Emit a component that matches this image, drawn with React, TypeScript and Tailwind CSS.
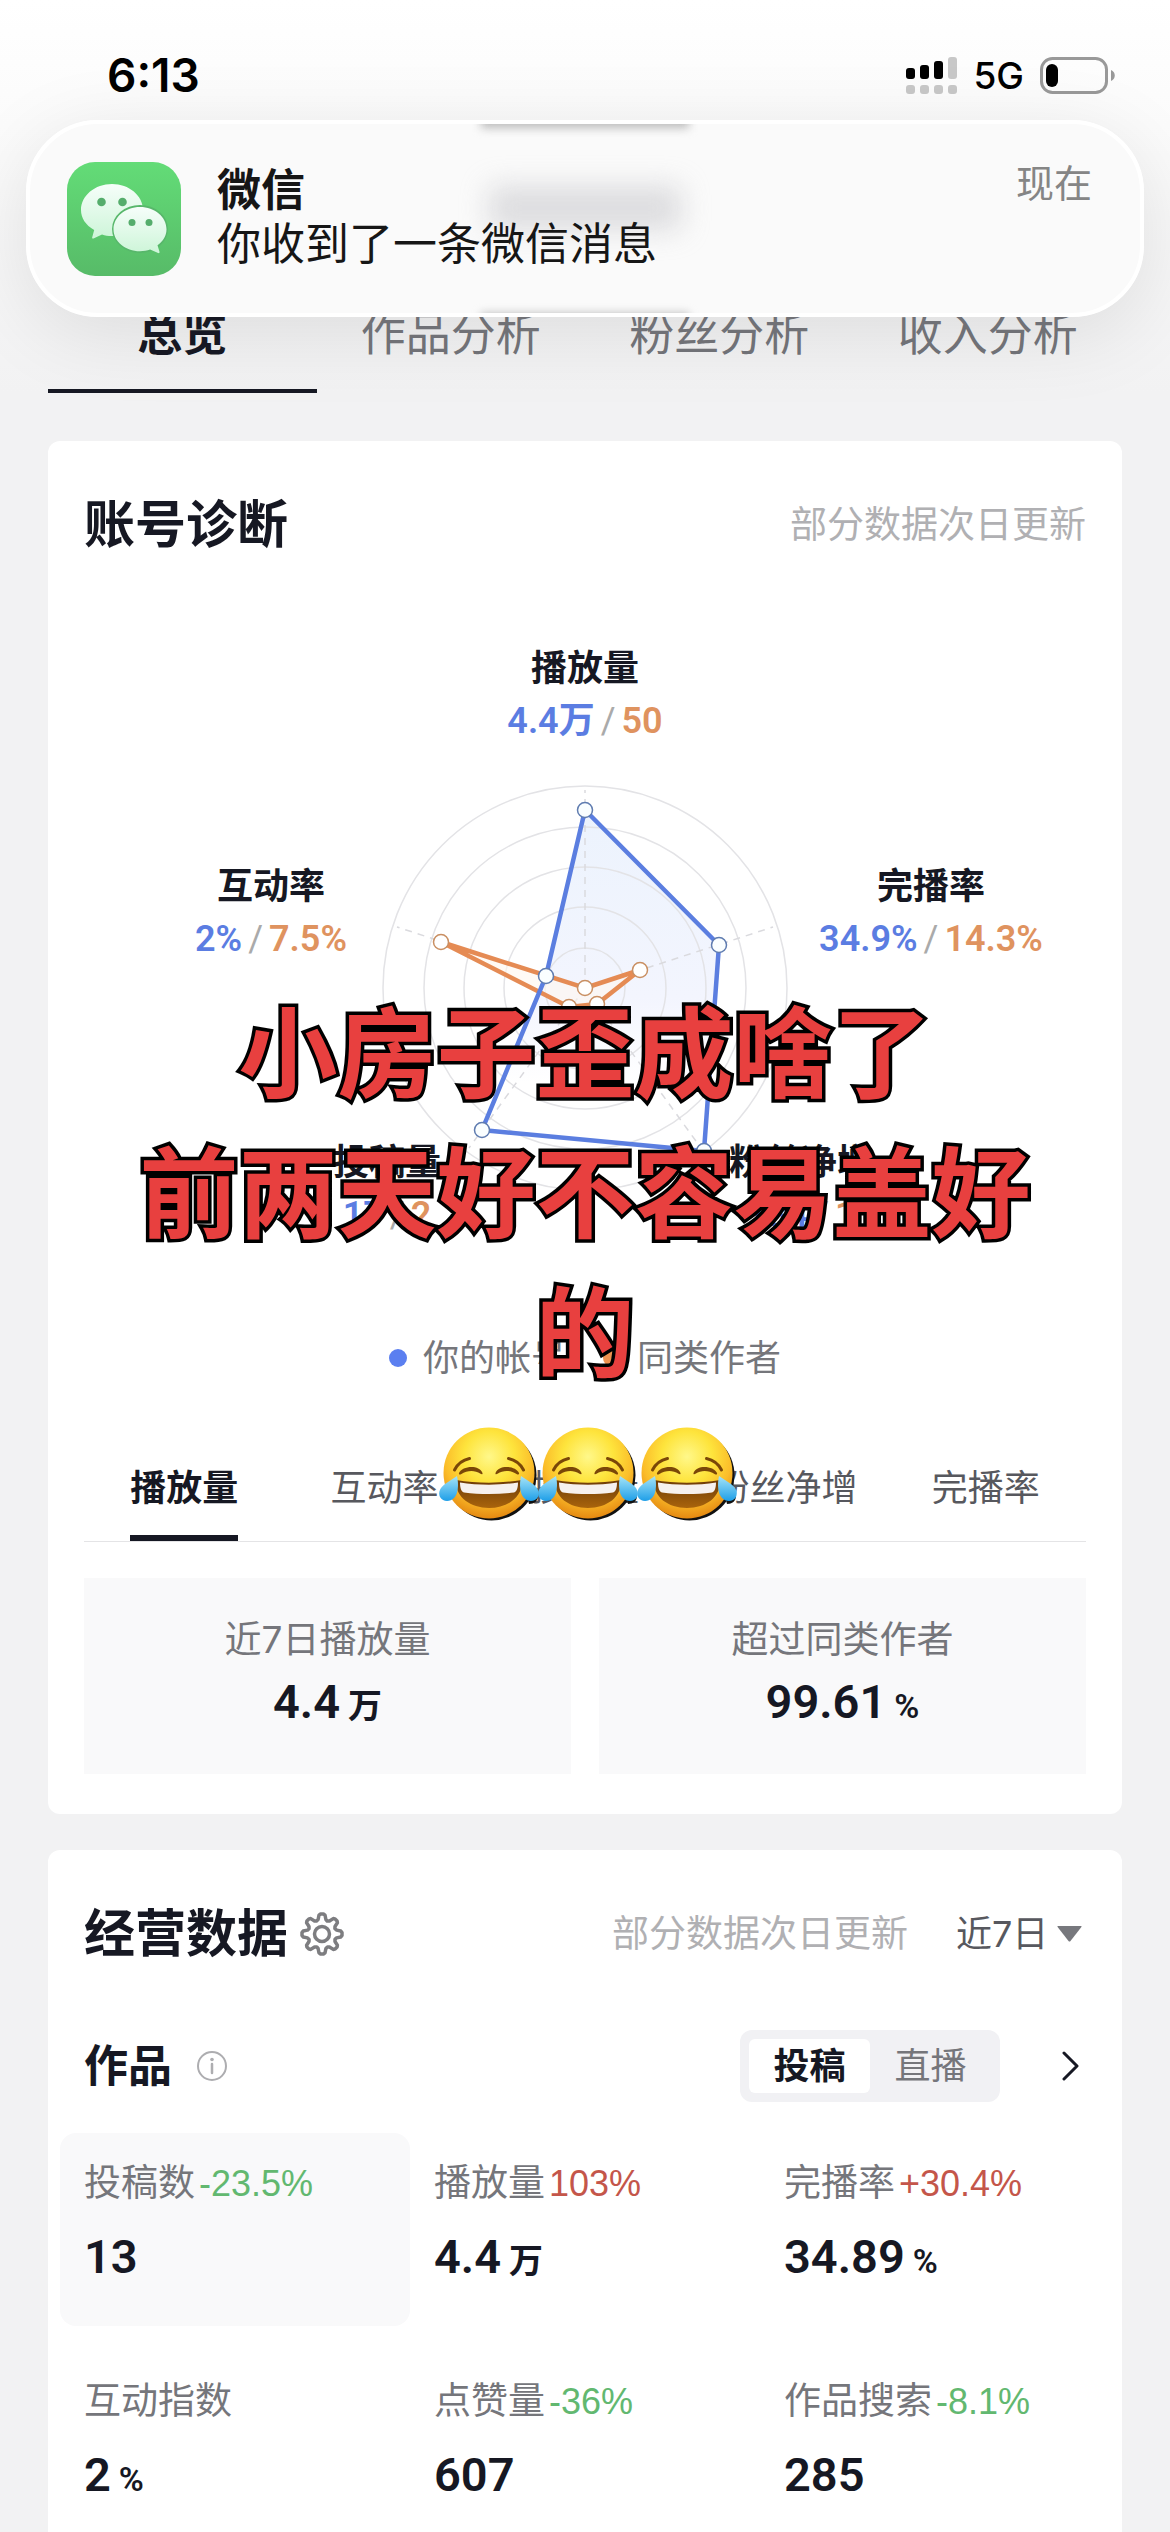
import { useState } from "react";

type Metric = { label: string; value: string; unit?: string; change?: string; trend?: "up" | "down" };

type AxisLabel = { name: string; mine: string; peer: string; x: number; y: number };

const pageTabs = ["总览", "作品分析", "粉丝分析", "收入分析"];
const chartTabs = ["播放量", "互动率", "投稿量", "粉丝净增", "完播率"];

const metrics: Metric[] = [
  { label: "投稿数", value: "13", change: "-23.5%", trend: "down" },
  { label: "播放量", value: "4.4", unit: "万", change: "103%", trend: "up" },
  { label: "完播率", value: "34.89", unit: "%", change: "+30.4%", trend: "up" },
  { label: "互动指数", value: "2", unit: "%" },
  { label: "点赞量", value: "607", change: "-36%", trend: "down" },
  { label: "作品搜索", value: "285", change: "-8.1%", trend: "down" },
];

const axisLabels: AxisLabel[] = [
  { name: "播放量", mine: "4.4万", peer: "50", x: 501, y: 51 },
  { name: "互动率", mine: "2%", peer: "7.5%", x: 187, y: 269 },
  { name: "完播率", mine: "34.9%", peer: "14.3%", x: 847, y: 269 },
  { name: "投稿量", mine: "17", peer: "2", x: 303, y: 545 },
  { name: "粉丝净增", mine: "184", peer: "1", x: 717, y: 545 },
];

const minePoints = [[501, 180], [635, 315], [620, 521], [398, 500], [462, 346]];
const peerPoints = [[501, 358], [556, 340], [513, 374], [485, 377], [357, 312]];
const axisEnds = [[501, 160], [689, 297], [617, 518], [385, 518], [313, 297]];

const toPoints = (list: number[][]) => list.map((p) => p.join(",")).join(" ");

// eight-tooth gear outline around 22,22
const gearPoints = Array.from({ length: 8 }, (_, i) => {
  const at = (deg: number, r: number) => {
    const a = ((i * 45 + deg) * Math.PI) / 180;
    return `${(22 + r * Math.sin(a)).toFixed(1)},${(22 - r * Math.cos(a)).toFixed(1)}`;
  };
  return [at(-15, 15), at(-9, 19), at(-4, 20), at(4, 20), at(9, 19), at(15, 15), at(22, 14)].join(" ");
}).join(" ");

function StatusBar() {
  return (
    <div className="flex h-[150px] items-center justify-between pl-[107px] pr-[55px] text-black">
      <span className="text-[46px] font-semibold leading-none">6:13</span>
      <div className="flex items-center gap-4">
        <svg width="51" height="37" viewBox="0 0 51 37" aria-hidden="true">
          <rect x="0" y="11" width="9" height="11" rx="3" />
          <rect x="14" y="8" width="9" height="14" rx="3" />
          <rect x="28" y="4" width="9" height="18" rx="3" />
          <rect x="42" y="0" width="9" height="22" rx="3" fill="#c8c8c8" />
          {[0, 14, 28, 42].map((x) => (
            <rect key={x} x={x} y="28" width="9" height="9" rx="3" fill="#c8c8c8" />
          ))}
        </svg>
        <span className="text-[37px] font-medium leading-none">5G</span>
        <svg width="75" height="37" viewBox="0 0 75 37" aria-hidden="true">
          <rect x="1.5" y="1.5" width="65" height="34" rx="11" fill="none" stroke="#999" strokeWidth="3" />
          <rect x="6" y="7" width="12" height="23" rx="6" />
          <path d="M71 13c5 2 5 9 0 11z" fill="#999" />
        </svg>
      </div>
    </div>
  );
}

function WeChatIcon() {
  return (
    <svg className="size-[114px] shrink-0" viewBox="0 0 114 114" aria-hidden="true">
      <defs>
        <linearGradient id="wx-bg" x1="0" y1="0" x2="0" y2="1">
          <stop offset="0" stopColor="#63dc77" />
          <stop offset="1" stopColor="#57bb68" />
        </linearGradient>
        <linearGradient id="wx-bubble" x1="0" y1="0" x2="0" y2="1">
          <stop offset="0" stopColor="#f6fefa" />
          <stop offset="1" stopColor="#cdf5d8" />
        </linearGradient>
      </defs>
      <rect width="114" height="114" rx="28" fill="url(#wx-bg)" />
      <path
        d="M45 22c17 0 31 11.500 31 26S62 74 45 74c-4 0-7-.5-10-1.500l-8.500 4c-1 .4-1.600-.3-1.300-1.200l2-7.300C18.500 63 14 56 14 48c0-14.500 14-26 31-26z"
        fill="url(#wx-bubble)"
      />
      <ellipse cx="73" cy="67" rx="28" ry="24" fill="#58b76b" />
      <path
        d="M73 45c14.600 0 26.500 9.800 26.500 22.300 0 6.700-3.500 12-9 16l2 6.500c.3 1-.5 1.600-1.400 1.200l-8-3.400c-3 1.200-6.500 1.700-10.100 1.700-14.600 0-26.500-9.700-26.500-22S58.400 45 73 45z"
        fill="url(#wx-bubble)"
      />
      <g fill="#55ad6c">
        <circle cx="34.500" cy="40" r="4.300" />
        <circle cx="55.500" cy="40" r="4.300" />
        <circle cx="65" cy="60.500" r="3.500" />
        <circle cx="82" cy="60.500" r="3.500" />
      </g>
    </svg>
  );
}

function Notification() {
  return (
    <div
      role="status"
      className="absolute inset-x-[26px] top-[120px] z-20 flex h-[197px] items-center gap-9 overflow-hidden rounded-[72px] border-4 border-white bg-[#fafafa] pl-[37px] pr-12"
    >
      <div className="absolute -top-3 left-1/2 h-4 w-52 -translate-x-1/2 bg-[#bbb] blur-[5px]" />
      <div className="absolute left-1/2 top-[62px] h-11 w-48 -translate-x-1/2 bg-[#c9c9cd] opacity-60 blur-[14px]" />
      <div className="absolute -bottom-3 left-1/2 h-3 w-52 -translate-x-1/2 bg-[#bbb] blur-[4px]" />
      <WeChatIcon />
      <div className="relative flex-1 pb-1 text-[44px] leading-[54px] text-[#161616]">
        <p className="font-bold">微信</p>
        <p>你收到了一条微信消息</p>
      </div>
      <span className="relative mb-[72px] text-[38px] leading-[54px] text-[#858585]">现在</span>
    </div>
  );
}

function RadarChart() {
  return (
    <svg className="mt-[77px] block w-full" viewBox="0 0 1002 620" role="img" aria-label="账号诊断雷达图">
      <defs>
        <linearGradient id="radar-fill" x1="0" y1="0" x2="0" y2="1">
          <stop offset="0" stopColor="#ecf3fd" />
          <stop offset="0.55" stopColor="#f3f5fe" />
          <stop offset="0.8" stopColor="#fff" />
        </linearGradient>
      </defs>
      <polygon points={toPoints(minePoints)} fill="url(#radar-fill)" />
      <g fill="none" stroke="#e3e3e6" strokeWidth="1.500">
        {[40, 81, 121, 161, 202].map((r) => (
          <circle key={r} cx="501" cy="358" r={r} />
        ))}
        {axisEnds.map(([x, y]) => (
          <line key={`${x}-${y}`} x1="501" y1="358" x2={x} y2={y} stroke="#dadade" strokeDasharray="7 6" />
        ))}
      </g>
      <polygon points={toPoints(peerPoints)} fill="#fff6ee" fillOpacity="0.600" stroke="#e58b54" strokeWidth="4.500" />
      <polygon points={toPoints(minePoints)} fill="none" stroke="#5b7ee0" strokeWidth="4.500" />
      {peerPoints.map(([x, y]) => (
        <circle key={`${x}-${y}`} cx={x} cy={y} r="7.500" fill="#fff" stroke="#c98f62" strokeWidth="1.500" />
      ))}
      {minePoints.map(([x, y]) => (
        <circle key={`${x}-${y}`} cx={x} cy={y} r="7.500" fill="#fafeff" stroke="#5f7cb0" strokeWidth="1.500" />
      ))}
      {axisLabels.map((a) => (
        <g key={a.name} textAnchor="middle" className="font-['Roboto','Noto_Sans_CJK_SC',sans-serif] text-[36px]">
          <text x={a.x} y={a.y} className="fill-[#161823] font-bold">{a.name}</text>
          <text x={a.x} y={a.y + 52} className="font-semibold">
            <tspan className="fill-[#5b7de2]">{a.mine}</tspan>
            <tspan dx="6" className="fill-[#aaa] font-normal">/</tspan>
            <tspan dx="6" className="fill-[#df935f]">{a.peer}</tspan>
          </text>
        </g>
      ))}
    </svg>
  );
}

function JoyFace() {
  return (
    <svg className="h-24 w-[99px] overflow-visible" viewBox="-2 0 99 96" aria-hidden="true">
      <defs>
        <radialGradient id="joy-face" cx="0.5" cy="0.32" r="0.7">
          <stop offset="0" stopColor="#fff88a" />
          <stop offset="0.4" stopColor="#fee43c" />
          <stop offset="0.7" stopColor="#fbbd2a" />
          <stop offset="1" stopColor="#e2830f" />
        </radialGradient>
        <linearGradient id="joy-tear" x1="0" y1="0" x2="0" y2="1">
          <stop offset="0" stopColor="#a6e4f8" />
          <stop offset="1" stopColor="#1f9fe8" />
        </linearGradient>
        <linearGradient id="joy-mouth" x1="0" y1="0" x2="0" y2="1">
          <stop offset="0" stopColor="#6d3b06" />
          <stop offset="1" stopColor="#a9640c" />
        </linearGradient>
      </defs>
      <g fill="#111">
        <circle cx="52.500" cy="50.500" r="45" />
        <path d="M84 54c9 4 15 10 15 17 0 5-4 8-9 8z" />
      </g>
      <circle cx="50" cy="48" r="45.500" fill="url(#joy-face)" />
      <g fill="none" stroke="#7a4708" strokeLinecap="round" strokeWidth="3">
        <path d="M15.500 45c3-6 8-10 15-11.500" />
        <path d="M84.500 45c-3-6-8-10-15-11.500" />
      </g>
      <g fill="#7a4708">
        <path d="M20 48c3-7 20-9 23.500 0 .3 1.500-.8 1.600-2 .8-6-4-13-3.600-19.500.4-1.200.7-2.500.3-2-1.200z" />
        <path d="M56.500 48c3.500-9 20.500-7 23.500 0 .5 1.500-.8 1.900-2 1.200-6.500-4-13.500-4.400-19.500-.4-1.200.8-2.300.7-2-.8z" />
      </g>
      <path d="M17 55c21 3.500 45 3.500 66 0 1 17-14 28-33 28S16 72 17 55z" fill="url(#joy-mouth)" />
      <path d="M21 57.500c18 3 40 3 58 0 0 5-1 9-4 10-16 2-34 2-50 0-3-1-4-5-4-10z" fill="#f6f1ee" />
      <path d="M18 51c2 9 1 18-3 22-4 4-11 4-14-1-2-5 0-9 5-13 4-3 8-5 12-8z" fill="url(#joy-tear)" />
      <path d="M82 51c-2 9-1 18 3 22 4 4 11 4 14-1 2-5 0-9-5-13-4-3-8-5-12-8z" fill="url(#joy-tear)" />
    </svg>
  );
}

function Caption() {
  return (
    <div className="pointer-events-none absolute inset-x-0 top-[543px] z-10 text-center text-[99px] font-bold leading-[140px] text-[#e8403f] [paint-order:stroke_fill] [-webkit-text-stroke:7px_#000] [text-shadow:2px_2px_0_#000]">
      <p>小房子歪成啥了</p>
      <p>前两天好不容易盖好</p>
      <p>的</p>
      <div className="flex h-[138px] items-center justify-center">
        <JoyFace />
        <JoyFace />
        <JoyFace />
      </div>
    </div>
  );
}

function StatBox({ label, value, unit }: { label: string; value: string; unit: string }) {
  return (
    <div className="bg-[#f9f9fa] pb-[42px] pt-[38px] text-center">
      <p className="text-[37px] leading-[48px] text-[#75767b]">{label}</p>
      <p className="mt-2 flex h-[60px] items-baseline justify-center gap-2 font-['Roboto','Noto_Sans_CJK_SC',sans-serif] leading-[60px]">
        <span className="text-[47px] font-semibold">{value}</span>
        <span className="text-[34px] font-semibold">{unit}</span>
      </p>
    </div>
  );
}

export default function App() {
  const [page, setPage] = useState("总览");
  const [chart, setChart] = useState("播放量");
  const [kind, setKind] = useState("投稿");
  const [picked, setPicked] = useState("投稿数");

  return (
    <div className="relative h-screen overflow-hidden bg-[#f2f2f3] font-['Inter','Noto_Sans_CJK_SC',sans-serif] text-[#161823]">
      <header className="bg-linear-to-b from-white via-[#fafafa] via-40% to-[#f2f2f3]">
        <StatusBar />
        <div className="absolute inset-x-[26px] top-[120px] h-[197px] rounded-[72px] shadow-[0_16px_80px_rgba(0,0,0,0.1)]" />
        <Notification />
        <nav className="relative mx-12 flex pt-[155px]">
          {pageTabs.map((t) => (
            <button
              key={t}
              type="button"
              onClick={() => setPage(t)}
              className={`flex-1 border-b-4 pb-6 text-[45px] leading-[60px] ${page === t ? "border-[#161823] font-bold" : "border-transparent text-[#707176]"}`}
            >
              {t}
            </button>
          ))}
        </nav>
      </header>

      <main className="flex flex-col gap-9 px-12 pt-12">
        <section className="relative rounded-xl bg-white px-9 pb-10 pt-14">
          <div className="flex h-14 items-center justify-between">
            <h2 className="text-[51px] font-bold">账号诊断</h2>
            <span className="text-[37px] text-[#b0b0b3]">部分数据次日更新</span>
          </div>

          <RadarChart />

          <div className="mt-[84px] flex items-center justify-center gap-9 text-[36px] leading-[48px] text-[#75767b]">
            <span className="flex items-center gap-4">
              <i className="size-[18px] rounded-full bg-[#5b7ff0]" />
              你的帐号
            </span>
            <span className="flex items-center gap-4">
              <i className="size-[18px] rounded-full bg-[#ee9250]" />
              同类作者
            </span>
          </div>

          <div className="mt-[82px] flex border-b border-[#e4e4e6]">
            {chartTabs.map((t) => (
              <button
                key={t}
                type="button"
                onClick={() => setChart(t)}
                className="flex flex-1 justify-center whitespace-nowrap text-[36px] leading-[48px]"
              >
                <span
                  className={`border-b-6 pb-[23px] ${chart === t ? "border-[#161823] font-bold" : "border-transparent text-[#57585e]"}`}
                >
                  {t}
                </span>
              </button>
            ))}
          </div>

          <div className="mt-9 grid grid-cols-2 gap-7">
            <StatBox label="近7日播放量" value="4.4" unit="万" />
            <StatBox label="超过同类作者" value="99.61" unit="%" />
          </div>

          <Caption />
        </section>

        <section className="rounded-xl bg-white pt-14">
          <div className="flex h-14 items-center px-9">
            <h2 className="text-[51px] font-bold">经营数据</h2>
            <button type="button" aria-label="设置" className="ml-3">
              <svg className="size-11" viewBox="0 0 44 44" fill="none" stroke="#7d7d80" strokeWidth="3.500" strokeLinejoin="round">
                <polygon points={gearPoints} />
                <circle cx="22" cy="22" r="7.500" />
              </svg>
            </button>
            <span className="ml-auto text-[37px] text-[#b0b0b3]">部分数据次日更新</span>
            <label className="ml-12 flex items-center gap-2 pr-1">
              <select aria-label="时间范围" className="appearance-none bg-transparent text-[36px] leading-[48px] text-[#57585e]">
                <option>近7日</option>
              </select>
              <svg width="25" height="16" viewBox="0 0 25 16" fill="#77787d" aria-hidden="true">
                <path d="M1 0h23q1 0 .4 1L13.500 15q-1 1-2 0L.6 1Q0 0 1 0z" />
              </svg>
            </label>
          </div>

          <div className="mt-[68px] flex h-[72px] items-center px-9">
            <h3 className="text-[44px] font-bold">作品</h3>
            <button type="button" aria-label="说明" className="ml-6">
              <svg className="size-8" viewBox="0 0 32 32" fill="none" stroke="#adadb0" strokeWidth="2">
                <circle cx="16" cy="16" r="14" />
                <path d="M16 14v9" strokeWidth="2.500" strokeLinecap="round" />
                <circle cx="16" cy="9.500" r="1.800" fill="#adadb0" stroke="none" />
              </svg>
            </button>
            <div className="ml-auto flex rounded-xl bg-[#f1f1f4] p-[9px]">
              {["投稿", "直播"].map((k) => (
                <button
                  key={k}
                  type="button"
                  onClick={() => setKind(k)}
                  className={`w-[121px] rounded-md text-[36px] leading-[54px] ${kind === k ? "bg-white font-bold" : "text-[#75767b]"}`}
                >
                  {k}
                </button>
              ))}
            </div>
            <button type="button" aria-label="查看更多" className="ml-[62px]">
              <svg width="24" height="30" viewBox="0 0 24 30" fill="none" stroke="#161823" strokeWidth="3" strokeLinecap="round" strokeLinejoin="round">
                <path d="M2 2l13 13L2 28" />
              </svg>
            </button>
          </div>

          <div className="mx-3 mt-[31px] grid grid-cols-3 gap-y-[25px]">
            {metrics.map((m) => (
              <button
                key={m.label}
                type="button"
                onClick={() => setPicked(m.label)}
                className={`flex flex-col rounded-2xl px-6 pb-[37px] pt-6 text-left ${picked === m.label ? "bg-[#f9f9fa]" : ""}`}
              >
                <span className="flex h-[52px] items-baseline gap-1 text-[37px] leading-[52px] text-[#75767b]">
                  {m.label}
                  {m.change && (
                    <span className={`font-['Liberation_Sans',sans-serif] text-[36px] ${m.trend === "up" ? "text-[#c4564a]" : "text-[#62b870]"}`}>
                      {m.change}
                    </span>
                  )}
                </span>
                <span className="mt-4 flex h-[64px] items-baseline gap-2 font-['Roboto','Noto_Sans_CJK_SC',sans-serif] leading-[64px]">
                  <span className="text-[47px] font-semibold">{m.value}</span>
                  {m.unit && <span className="text-[34px] font-semibold">{m.unit}</span>}
                </span>
              </button>
            ))}
          </div>
        </section>
      </main>
    </div>
  );
}
